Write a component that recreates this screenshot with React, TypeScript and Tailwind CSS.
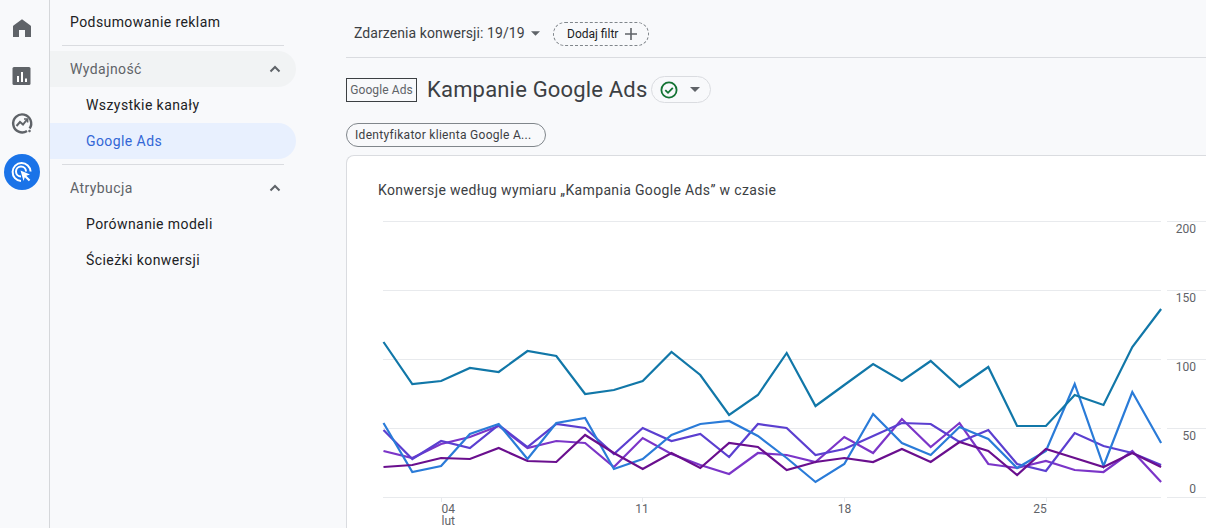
import React from "react";

const X = (i: number) => 383.5 + 28.8 * i;
const series: { c: string; y: number[] }[] = [
  { c: "#7b35c8", y: [451,458,444,437,426,448,441,443,467,438,454,465,474,453,455,462,437,453,419,447,423,464,468,461,470,472,451,482] },
  { c: "#5b3fd0", y: [430,459,441,448,425,447,424,428,454,428,441,434,457,424,428,455,449,436,423,424,442,430,464,471,433,446,453,465] },
  { c: "#2a7bd8", y: [423,472,466,434,424,459,423,418,469,459,435,424,421,436,458,482,464,414,443,455,427,439,468,451,384,466,392,443] },
  { c: "#1177a8", y: [342,384,381,368,372,351,356,394,390,381,352,375,415,395,353,406,385,364,381,361,387,367,426,426,395,405,347,309] },
  { c: "#6a0f8e", y: [467,465,458,459,448,461,462,435,453,469,453,468,443,447,470,462,458,462,449,462,442,451,475,449,458,467,453,467] },
];
const grid = [221, 290, 359, 428, 497];

function NavItem({ children, className = "" }: { children: React.ReactNode; className?: string }) {
  return <div className={`flex h-9 items-center text-[14px] tracking-[0.42px] ${className}`}>{children}</div>;
}

function Chevron() {
  return (
    <svg width="24" height="24" viewBox="0 0 24 24" className="absolute right-[9px] top-[6px]" fill="none" stroke="#5f6368" strokeWidth="2">
      <path d="M7.5 14.5 12 10l4.5 4.5" />
    </svg>
  );
}

export default function App() {
  return (
    <div className="flex h-[528px] w-[1206px] overflow-hidden bg-[#f8f9fb] font-['Roboto',sans-serif] text-[#202124]">
      <aside className="flex h-full w-[50px] shrink-0 flex-col items-center border-r border-[#d5d7da] pr-[5px] pt-[16px]">
        <svg width="24" height="24" viewBox="0 0 24 24" fill="#5f6368">
          <path d="M12 3.2 20.5 9.6a1 1 0 0 1 .5 1V21h-6v-7H9v7H3V10.6a1 1 0 0 1 .5-1z" />
        </svg>
        <svg width="20" height="20" viewBox="0 0 20 20" className="mt-[26px]">
          <rect x="0.5" y="1" width="18" height="18" rx="1.5" fill="#5f6368" />
          <path d="M5 10h2v6H5zM9 6h2v10H9zM13 12.5h2V16h-2z" fill="#fff" />
        </svg>
        <svg width="24" height="24" viewBox="0 0 24 24" className="mt-[25px]" fill="none" stroke="#5f6368">
          <path d="M19.6 17.5A9 9 0 1 0 17 20" strokeWidth="2.4" />
          <path d="M6.5 15 10 11l3 2.5 4-5" strokeWidth="2" />
          <path d="M14 8h3.6v3.6" strokeWidth="1.6" />
          <circle cx="19.5" cy="20" r="1" fill="#5f6368" strokeWidth="0.6" />
        </svg>
        <div className="mt-[19px] flex h-9 w-9 items-center justify-center rounded-full bg-[#1a73e8]">
          <svg width="24" height="24" viewBox="0 0 24 24" fill="none" stroke="#fff">
            <path d="M11 21a9 9 0 1 1 9.6-9.5" strokeWidth="2" />
            <path d="M11 16.5a5 5 0 1 1 5-5" strokeWidth="2" />
            <path d="M10.5 10.5 20 14.5l-3.7 1.3 4 4-1.5 1.5-4-4-1.3 3.7z" fill="#fff" stroke="none" />
          </svg>
        </div>
      </aside>

      <nav className="w-[296px] shrink-0 pr-[50px]">
        <NavItem className="mt-[4px] pl-[20px]">Podsumowanie reklam</NavItem>
        <div className="ml-[12px] mr-[12px] mt-[5px] border-t border-[#dadce0]" />
        <div className="relative mt-[5px] flex h-9 items-center rounded-r-full bg-[#f1f3f4] pl-[20px] text-[14px] tracking-[0.42px] text-[#5f6368]">
          Wydajność
          <Chevron />
        </div>
        <NavItem className="pl-[36px]">Wszystkie kanały</NavItem>
        <NavItem className="rounded-r-full bg-[#e8f0fe] pl-[36px] text-[#3367d6]">Google Ads</NavItem>
        <div className="ml-[12px] mr-[12px] mt-[5px] border-t border-[#dadce0]" />
        <div className="relative mt-[5px] flex h-9 items-center pl-[20px] text-[14px] tracking-[0.42px] text-[#5f6368]">
          Atrybucja
          <Chevron />
        </div>
        <NavItem className="pl-[36px]">Porównanie modeli</NavItem>
        <NavItem className="pl-[36px]">Ścieżki konwersji</NavItem>
      </nav>

      <main className="flex min-w-0 flex-1 flex-col">
        <div className="flex h-[58px] shrink-0 items-center border-b border-[#dadce0] pl-[8px] pt-[10px]">
          <span className="w-[171px] text-[14px] tracking-[0.08px] text-[#3c4043]">Zdarzenia konwersji: 19/19</span>
          <svg width="9" height="5" viewBox="0 0 10 5" className="ml-[6px]" fill="#5f6368"><path d="M0 0h10L5 5z" /></svg>
          <div className="ml-[13px] flex h-[24px] w-[96px] items-center rounded-full border border-dashed border-[#80868b] pl-[13px] text-[12px] text-[#202124]">
            Dodaj filtr
            <svg width="14" height="14" viewBox="0 0 14 14" className="ml-[6px]" fill="none" stroke="#5f6368" strokeWidth="1.6"><path d="M7 1v12M1 7h12" /></svg>
          </div>
        </div>
        <div className="mt-[18px] flex h-[27px] shrink-0 items-center">
          <div className="flex h-[24px] w-[71px] items-center justify-center border border-[#3c4043] text-[12px] tracking-[0.1px] text-[#5f6368]">Google Ads</div>
          <h1 className="ml-[10px] text-[22px] font-normal leading-[27px] tracking-[0.18px] text-[#3c4043]">Kampanie Google Ads</h1>
          <div className="ml-[4px] flex h-[27px] w-[60px] items-center rounded-full border border-[#dadce0] pl-[7px]">
            <svg width="20" height="20" viewBox="0 0 20 20" fill="none" stroke="#137333" strokeWidth="1.8">
              <circle cx="10" cy="10" r="7.6" />
              <path d="M6.3 10.2 9 12.8l4.8-5" />
            </svg>
            <svg width="10" height="5" viewBox="0 0 10 5" className="ml-[11px]" fill="#5f6368"><path d="M0 0h10L5 5z" /></svg>
          </div>
        </div>
        <div className="mt-[20px] flex h-[24px] w-[200px] shrink-0 items-center rounded-full border border-[#80868b] pl-[8px] text-[12px] tracking-[0.3px] text-[#3c4043]">
          Identyfikator klienta Google A...
        </div>
        <section className="mt-[8px] min-h-0 flex-1 rounded-tl-[8px] border-l border-t border-[#dadce0] bg-white pl-[31px] pt-[26px]">
          <h2 className="h-[33px] text-[14px] font-normal leading-[17px] tracking-[0.35px] text-[#3c4043]">
            Konwersje według wymiaru „Kampania Google Ads” w czasie
          </h2>
          <svg width="828" height="313" viewBox="378 215 828 313" className="block font-['Roboto',sans-serif]" fontSize="12" fill="#5f6368">
            {grid.map((y) => (
              <g key={y} stroke="#e8eaed" strokeWidth="1">
                <path d={`M383 ${y + 0.5}H1161`} />
                <path d={`M1167 ${y + 0.5}H1206`} />
              </g>
            ))}
            {[441, 642, 844, 1046].map((x) => (
              <path key={x} d={`M${x + 0.5} 497V502`} stroke="#e8eaed" />
            ))}
            {series.map((s) => (
              <polyline
                key={s.c}
                points={s.y.map((y, i) => `${X(i).toFixed(1)},${y}`).join(" ")}
                fill="none"
                stroke={s.c}
                strokeWidth="2.2"
                strokeLinejoin="miter"
              />
            ))}
            <g textAnchor="end">
              <text x="1196" y="233">200</text>
              <text x="1196" y="302">150</text>
              <text x="1196" y="371">100</text>
              <text x="1196" y="440">50</text>
              <text x="1196" y="493">0</text>
            </g>
            <text x="441.5" y="513">04</text>
            <text x="441.5" y="525">lut</text>
            <text x="642" y="513" textAnchor="middle">11</text>
            <text x="844.5" y="513" textAnchor="middle">18</text>
            <text x="1040" y="513" textAnchor="middle">25</text>
          </svg>
        </section>
      </main>
    </div>
  );
}
